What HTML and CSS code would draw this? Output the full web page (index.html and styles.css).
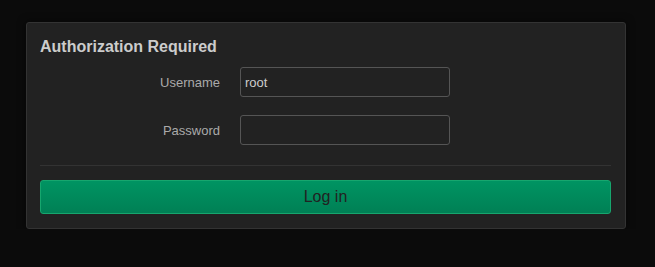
FILE: index.html
```html
<!DOCTYPE html>
<html lang="en">
<head>
    <meta charset="UTF-8">
    <meta name="viewport" content="width=device-width, initial-scale=1.0">
    <title>Authorization Required</title>
    <link rel="stylesheet" href="styles.css">
</head>
<body>
    <form class="login-card" onsubmit="return false">
        <h3>Authorization Required</h3>

        <div class="field-row">
            <label for="username">Username</label>
            <input type="text" id="username" value="root">
        </div>
        <div class="field-row">
            <label for="password">Password</label>
            <input type="password" id="password">
        </div>

        <hr class="divider">

        <button type="submit" class="btn-login">Log in</button>
    </form>
</body>
</html>
```

FILE: styles.css
```css
* {
    margin: 0;
    padding: 0;
    box-sizing: border-box;
}

body {
    font-family: 'Liberation Sans', Arial, sans-serif;
    background-color: #0b0b0b;
    color: #ccc;
    padding: 22px 29px 0 26px;
}

.login-card {
    width: 600px;
    background: #222;
    border: 1px solid #333;
    border-radius: 3px;
    box-shadow: 0 0 8px rgba(0,0,0,0.6);
    padding: 14px 14px 14px 13px;
}

.login-card h3 {
    font-size: 16px;
    line-height: 20px;
    font-weight: bold;
    color: #ccc;
    margin-bottom: 10px;
}

.field-row {
    display: flex;
    align-items: center;
    gap: 20px;
    margin-bottom: 18px;
}

.field-row label {
    width: 180px;
    text-align: right;
    font-size: 13px;
    color: #aaa;
}

.field-row input {
    width: 210px;
    height: 30px;
    background: #222;
    border: 1px solid #555;
    border-radius: 3px;
    color: #ccc;
    font-family: inherit;
    font-size: 13px;
    padding: 0 4px;
    outline: none;
}

.divider {
    border: none;
    border-top: 1px solid #333;
    margin: 20px 0 14px;
}

.btn-login {
    display: block;
    width: 100%;
    height: 34px;
    background: linear-gradient(to bottom, #009462 0%, #008055 100%);
    border: 1px solid #17a66e;
    border-radius: 3px;
    color: #222;
    font-family: inherit;
    font-size: 16px;
    cursor: pointer;
}
```
